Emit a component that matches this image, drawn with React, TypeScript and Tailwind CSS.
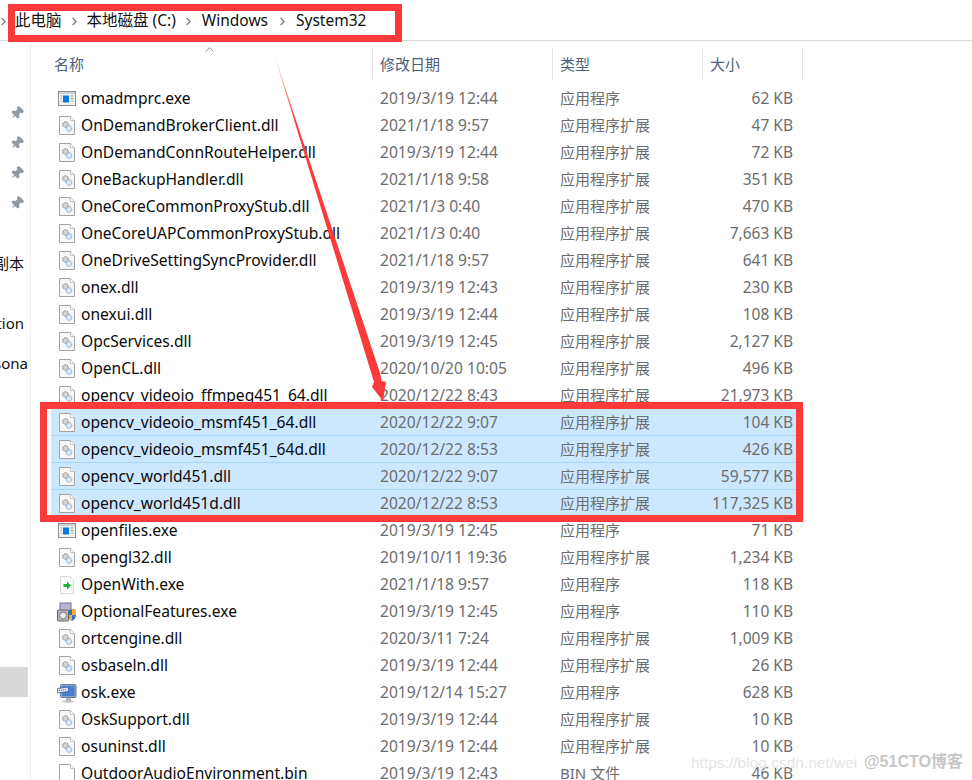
import React from 'react';
import { ChevronRight, ChevronUp, Pin } from 'lucide-react';

type FileKind = 'dll' | 'exe' | 'openwith' | 'features' | 'osk' | 'bin';

interface FileRow {
  name: string;
  date: string;
  type: string;
  size: string;
  kind: FileKind;
  selected?: boolean;
}

const EXT = '应用程序扩展';
const APP = '应用程序';

const files: FileRow[] = [
  { name: 'omadmprc.exe', date: '2019/3/19 12:44', type: APP, size: '62 KB', kind: 'exe' },
  { name: 'OnDemandBrokerClient.dll', date: '2021/1/18 9:57', type: EXT, size: '47 KB', kind: 'dll' },
  { name: 'OnDemandConnRouteHelper.dll', date: '2019/3/19 12:44', type: EXT, size: '72 KB', kind: 'dll' },
  { name: 'OneBackupHandler.dll', date: '2021/1/18 9:58', type: EXT, size: '351 KB', kind: 'dll' },
  { name: 'OneCoreCommonProxyStub.dll', date: '2021/1/3 0:40', type: EXT, size: '470 KB', kind: 'dll' },
  { name: 'OneCoreUAPCommonProxyStub.dll', date: '2021/1/3 0:40', type: EXT, size: '7,663 KB', kind: 'dll' },
  { name: 'OneDriveSettingSyncProvider.dll', date: '2021/1/18 9:57', type: EXT, size: '641 KB', kind: 'dll' },
  { name: 'onex.dll', date: '2019/3/19 12:43', type: EXT, size: '230 KB', kind: 'dll' },
  { name: 'onexui.dll', date: '2019/3/19 12:44', type: EXT, size: '108 KB', kind: 'dll' },
  { name: 'OpcServices.dll', date: '2019/3/19 12:45', type: EXT, size: '2,127 KB', kind: 'dll' },
  { name: 'OpenCL.dll', date: '2020/10/20 10:05', type: EXT, size: '496 KB', kind: 'dll' },
  { name: 'opencv_videoio_ffmpeg451_64.dll', date: '2020/12/22 8:43', type: EXT, size: '21,973 KB', kind: 'dll' },
  { name: 'opencv_videoio_msmf451_64.dll', date: '2020/12/22 9:07', type: EXT, size: '104 KB', kind: 'dll', selected: true },
  { name: 'opencv_videoio_msmf451_64d.dll', date: '2020/12/22 8:53', type: EXT, size: '426 KB', kind: 'dll', selected: true },
  { name: 'opencv_world451.dll', date: '2020/12/22 9:07', type: EXT, size: '59,577 KB', kind: 'dll', selected: true },
  { name: 'opencv_world451d.dll', date: '2020/12/22 8:53', type: EXT, size: '117,325 KB', kind: 'dll', selected: true },
  { name: 'openfiles.exe', date: '2019/3/19 12:45', type: APP, size: '71 KB', kind: 'exe' },
  { name: 'opengl32.dll', date: '2019/10/11 19:36', type: EXT, size: '1,234 KB', kind: 'dll' },
  { name: 'OpenWith.exe', date: '2021/1/18 9:57', type: APP, size: '118 KB', kind: 'openwith' },
  { name: 'OptionalFeatures.exe', date: '2019/3/19 12:45', type: APP, size: '110 KB', kind: 'features' },
  { name: 'ortcengine.dll', date: '2020/3/11 7:24', type: EXT, size: '1,009 KB', kind: 'dll' },
  { name: 'osbaseln.dll', date: '2019/3/19 12:44', type: EXT, size: '26 KB', kind: 'dll' },
  { name: 'osk.exe', date: '2019/12/14 15:27', type: APP, size: '628 KB', kind: 'osk' },
  { name: 'OskSupport.dll', date: '2019/3/19 12:44', type: EXT, size: '10 KB', kind: 'dll' },
  { name: 'osuninst.dll', date: '2019/3/19 12:44', type: EXT, size: '10 KB', kind: 'dll' },
  { name: 'OutdoorAudioEnvironment.bin', date: '2019/3/19 12:43', type: 'BIN 文件', size: '46 KB', kind: 'bin' },
];

const FileIcon: React.FC<{ kind: FileKind }> = ({ kind }) => {
  if (kind === 'exe') {
    return (
      <svg width="18" height="15" viewBox="0 0 18 15">
        <rect x="0.5" y="0.500" width="17" height="14" fill="#f4f4f4" stroke="#8d8d8d" />
        <rect x="1" y="1" width="16" height="2" fill="#c9d3de" />
        <rect x="5" y="4.500" width="6" height="7" fill="#0a78d7" />
        <path d="M2.500 5h1.500M2.500 7.500h1.500M2.500 10h1.500M12.500 5h3M12.500 7.500h3M12.500 10h3" stroke="#9a9a9a" />
      </svg>
    );
  }
  if (kind === 'openwith') {
    return (
      <svg width="16" height="18" viewBox="0 0 16 18">
        <path d="M1.500 .5h9l4 4v13h-13z" fill="#fcfcfc" stroke="#dadada" />
        <path d="M4.500 8h3.500V5.500L12 9.500l-4 4V11H4.500z" fill="#19b33a" />
      </svg>
    );
  }
  if (kind === 'features') {
    return (
      <svg width="20" height="20" viewBox="0 0 20 20">
        <rect x="3" y="1" width="11" height="14" fill="#b9b6d0" stroke="#74739a" />
        <rect x="0.500" y="8" width="11" height="11" rx="1" fill="#b5b8bb" stroke="#62676c" />
        <circle cx="6" cy="13.500" r="3.500" fill="#e5e7e8" stroke="#7b8084" />
        <path d="M12 8l3-1 4 1v5c0 3-2 5-4 6-2-1-3-2-3-4z" fill="#3c6fc0" />
        <path d="M15 7l4 1v5h-4zM12 13h3v6c-2-1-3-3-3-6z" fill="#f2b632" />
      </svg>
    );
  }
  if (kind === 'osk') {
    return (
      <svg width="20" height="20" viewBox="0 0 20 20">
        <ellipse cx="11" cy="18.500" rx="6" ry="1.500" fill="#c9cbce" />
        <rect x="9" y="14" width="5" height="4" fill="#b5b9bd" />
        <rect x="3.500" y="1.500" width="15.500" height="13" rx="1" fill="#8fa6cb" stroke="#6c7d9c" />
        <rect x="5" y="3" width="12.500" height="10" fill="#4d7fd0" />
        <path d="M0.500 5.500l11-1.500v4.500l-11 1.500z" fill="#dfe9f8" stroke="#2f4f8e" strokeWidth="0.7" />
        <path d="M2 7.500l8-1" stroke="#3a5a9a" strokeDasharray="1 1" />
      </svg>
    );
  }
  return (
    <svg width="16" height="19" viewBox="0 0 16 19">
      <path d="M.5 .5h11l4 4v14H.5z" fill={kind === 'bin' ? '#ffffff' : '#f7f7f7'} stroke="#a3a3a3" />
      <path d="M11.500 .5v4h4" fill="#ffffff" stroke="#c4c4c4" />
      {kind === 'dll' && (
        <>
          <circle cx="6.500" cy="8.500" r="2.800" fill="#d4d4d4" stroke="#808080" strokeDasharray="1.2 .6" />
          <circle cx="10" cy="12.500" r="2.800" fill="#d9e9f8" stroke="#6f9cc7" strokeDasharray="1.2 .6" />
        </>
      )}
    </svg>
  );
};

const Row: React.FC<{ file: FileRow }> = ({ file }) => (
  <div
    className={`flex h-[27px] w-[750px] shrink-0 items-center ${
      file.selected ? 'border-y border-t-transparent border-b-[#a6d6fb] bg-[#cce8ff]' : ''
    }`}
  >
    <div className="flex w-[27px] shrink-0 items-center justify-center pl-[4px]">
      <FileIcon kind={file.kind} />
    </div>
    <div className="w-[302px] shrink-0 overflow-hidden whitespace-nowrap pl-[3px] text-[15.6px] text-[#0a0a0a]">
      {file.name}
    </div>
    <div className="w-[180px] shrink-0 whitespace-nowrap text-[15.6px] text-[#6d6d6d]">{file.date}</div>
    <div className="w-[150px] shrink-0 whitespace-nowrap text-[#6d6d6d]">{file.type}</div>
    <div className="w-[91px] shrink-0 whitespace-nowrap pr-[8px] text-right text-[15.5px] text-[#6d6d6d]">{file.size}</div>
  </div>
);

const HeaderCell: React.FC<{ label: string; className: string }> = ({ label, className }) => (
  <div className={`flex h-[32px] shrink-0 items-center border-r border-[#e5e5e5] text-[#4c607a] ${className}`}>
    {label}
  </div>
);

const Crumb: React.FC<{ label: string }> = ({ label }) => (
  <span className="whitespace-nowrap text-[#111]">{label}</span>
);

const Sep: React.FC<{ className: string }> = ({ className }) => (
  <ChevronRight className={`h-[13px] w-[13px] text-[#7a7a7a] ${className}`} strokeWidth={2} />
);

const SidePin: React.FC = () => (
  <div className="flex h-[30px] items-center justify-end pr-[6px]">
    <Pin className="h-[14px] w-[14px] rotate-45 fill-[#8f9aa5] text-[#8f9aa5]" strokeWidth={2} />
  </div>
);

const SideText: React.FC<{ label: string; className: string }> = ({ label, className }) => (
  <div className={`flex h-[30px] items-center justify-end whitespace-nowrap text-[#111] ${className}`}>{label}</div>
);

const App: React.FC = () => {
  return (
    <div className="relative h-[780px] w-[972px] overflow-hidden bg-white font-['Noto_Sans','Noto_Sans_CJK_SC',sans-serif] text-[15px]">
      <div className="flex h-[41px] items-center border-b border-[#d9d9d9] pt-[2px] text-[15.5px]">
        <Sep className="ml-[-3px] mr-[5px]" />
        <Crumb label="此电脑" />
        <Sep className="mx-[6px]" />
        <Crumb label="本地磁盘 (C:)" />
        <Sep className="mx-[6.5px]" />
        <Crumb label="Windows" />
        <Sep className="mx-[7.5px]" />
        <Crumb label="System32" />
      </div>

      <div className="flex h-[739px]">
        <aside className="w-[31px] shrink-0 overflow-hidden border-r border-[#f0f0f0]">
          <div className="h-[57px]" />
          <SidePin />
          <SidePin />
          <SidePin />
          <SidePin />
          <SideText label="副本" className="mt-[30px] pr-[6px]" />
          <SideText label="Application" className="mt-[30px] pr-[6px]" />
          <SideText label="Personal Persona" className="mt-[10px] pr-[2px]" />
          <div className="mr-[2px] mt-[289px] h-[30px] bg-[#d9d9d9]" />
        </aside>

        <main className="min-w-0 flex-1 pl-[20px]">
          <div className="relative mt-[7px] flex">
            <ChevronUp className="absolute left-[151px] top-[-6px] h-[15px] w-[15px] text-[#8a8a8a]" strokeWidth={1.5} />
            <HeaderCell label="名称" className="w-[322px] pl-[3px]" />
            <HeaderCell label="修改日期" className="w-[180px] pl-[7px]" />
            <HeaderCell label="类型" className="w-[150px] pl-[7px]" />
            <HeaderCell label="大小" className="w-[100px] pl-[7px]" />
          </div>
          <div className="mt-[5px] flex flex-col">
            {files.map((file) => (
              <Row key={file.name} file={file} />
            ))}
          </div>
        </main>
      </div>

      {/* annotations drawn over the screenshot */}
      <div className="absolute left-[8px] top-[4px] h-[38px] w-[394px] border-[7px] border-[#fc3a3a]" />
      <div className="absolute left-[40px] top-[402px] h-[120px] w-[763px] border-[7px] border-[#fc3a3a]" />
      <svg className="absolute left-0 top-0" width="972" height="780" viewBox="0 0 972 780">
        <defs>
          <linearGradient id="arrowFade" gradientUnits="userSpaceOnUse" x1="274" y1="54" x2="296" y2="122">
            <stop offset="0" stopColor="#ffc4c4" />
            <stop offset="1" stopColor="#fc3a3a" />
          </linearGradient>
        </defs>
        <path d="M274 54L380 373L381.500 381L386 382L383 401L372 387L374 382z" fill="url(#arrowFade)" />
      </svg>

      <div className="absolute left-[691px] top-[751px] whitespace-nowrap font-['Liberation_Sans',sans-serif] text-[15.5px] text-[#e6e6e6]">
        https://blog.csdn.net/wei
      </div>
      <div className="absolute left-[864px] top-[750px] whitespace-nowrap font-['Liberation_Sans','Noto_Sans_CJK_SC',sans-serif] text-[16px] font-bold text-[#c6c6c6]">
        @51CTO博客
      </div>
    </div>
  );
};

export default App;
